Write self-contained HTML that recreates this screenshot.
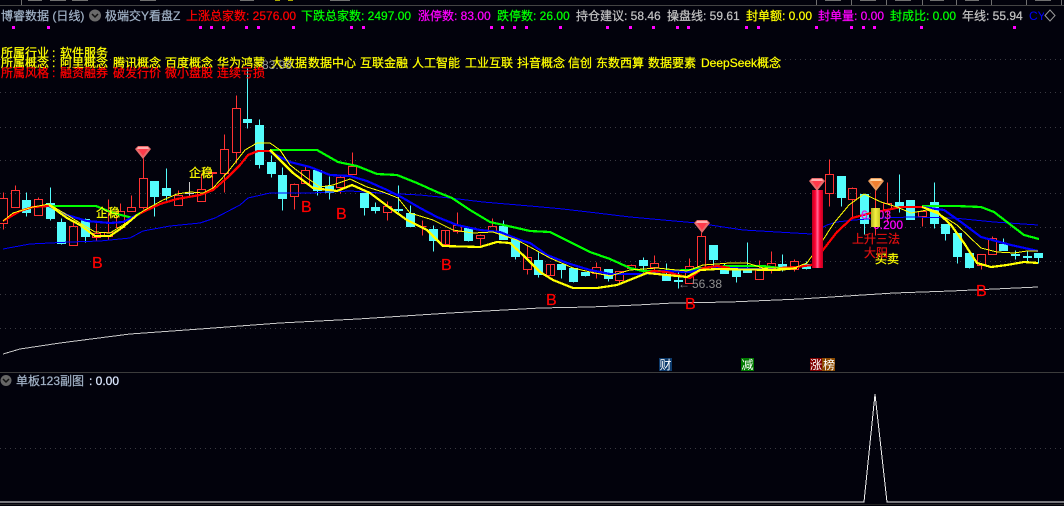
<!DOCTYPE html>
<html><head><meta charset="utf-8"><style>
html,body{margin:0;padding:0;background:#02020c;width:1064px;height:506px;overflow:hidden}
svg{display:block}
text{font-family:"Liberation Sans","Noto Sans CJK SC",sans-serif;font-size:12px}
polyline{shape-rendering:crispEdges}
.s text,text.s{stroke-width:.25px;stroke:currentColor}
</style></head><body>
<svg width="1064" height="506" viewBox="0 0 1064 506" xmlns="http://www.w3.org/2000/svg">
<defs>
<linearGradient id="rb" x1="0" x2="1" y1="0" y2="0"><stop offset="0" stop-color="#b80020"/><stop offset=".3" stop-color="#ff0030"/><stop offset=".5" stop-color="#ff6a98"/><stop offset=".7" stop-color="#ff0030"/><stop offset="1" stop-color="#c00020"/></linearGradient>
<linearGradient id="yb" x1="0" x2="1" y1="0" y2="0"><stop offset="0" stop-color="#b0b020"/><stop offset=".5" stop-color="#f4f040"/><stop offset="1" stop-color="#c8c420"/></linearGradient>
</defs>
<rect width="1064" height="506" fill="#02020c"/>
<!-- top strip -->
<g fill="#707070" shape-rendering="crispEdges">
<rect x="0" y="5" width="1064" height="1" fill="#444"/>
<rect x="21" y="0" width="1" height="5"/>
<rect x="816" y="0" width="1" height="5"/><rect x="851" y="0" width="1" height="5"/><rect x="886" y="0" width="1" height="5"/><rect x="922" y="0" width="1" height="5"/><rect x="956" y="0" width="1" height="5"/><rect x="991" y="0" width="1" height="5"/><rect x="1026" y="0" width="1" height="5"/><rect x="1061" y="0" width="1" height="5"/>
<rect x="28" y="0" width="14" height="1"/><rect x="50" y="0" width="16" height="1"/><rect x="72" y="0" width="16" height="1"/><rect x="140" y="0" width="16" height="1"/><rect x="240" y="0" width="14" height="1"/>
<rect x="275" y="0" width="5" height="1" fill="#aa0"/><rect x="288" y="0" width="5" height="1" fill="#aa0"/><rect x="330" y="0" width="20" height="1"/><rect x="825" y="0" width="16" height="1"/><rect x="860" y="0" width="16" height="1"/><rect x="895" y="0" width="16" height="1"/><rect x="930" y="0" width="14" height="1"/><rect x="965" y="0" width="14" height="1"/><rect x="1035" y="0" width="16" height="1"/>
</g>
<!-- grid -->
<g stroke="#3a3a42" stroke-width="1" stroke-dasharray="1 4" shape-rendering="crispEdges">
<path d="M0 59.500H1064M0 92.500H1064M0 127.500H1064M0 160.500H1064M0 193.500H1064M0 227.500H1064M0 261.500H1064M0 294.500H1064M0 328.500H1064M0 448.500H1064"/>
</g>
<rect x="0" y="372" width="1064" height="1" fill="#3c3c3c" shape-rendering="crispEdges"/>
<rect x="0" y="504" width="1064" height="1" fill="#222" shape-rendering="crispEdges"/>
<!-- magenta dots -->
<g fill="#f0f" shape-rendering="crispEdges">
<rect x="12" y="26" width="3" height="3"/><rect x="47" y="26" width="3" height="3"/><rect x="199" y="26" width="3" height="3"/><rect x="210" y="26" width="3" height="3"/><rect x="222" y="26" width="3" height="3"/><rect x="245" y="26" width="3" height="3"/><rect x="257" y="26" width="3" height="3"/><rect x="292" y="26" width="3" height="3"/><rect x="350" y="26" width="3" height="3"/><rect x="362" y="26" width="3" height="3"/><rect x="490" y="26" width="3" height="3"/><rect x="501" y="26" width="3" height="3"/><rect x="513" y="26" width="3" height="3"/><rect x="525" y="26" width="3" height="3"/><rect x="559" y="26" width="3" height="3"/><rect x="606" y="26" width="3" height="3"/><rect x="629" y="26" width="3" height="3"/><rect x="652" y="26" width="3" height="3"/><rect x="676" y="26" width="3" height="3"/><rect x="687" y="26" width="3" height="3"/><rect x="745" y="26" width="3" height="3"/><rect x="757" y="26" width="3" height="3"/><rect x="815" y="26" width="3" height="3"/><rect x="850" y="26" width="3" height="3"/><rect x="862" y="26" width="3" height="3"/><rect x="873" y="26" width="3" height="3"/><rect x="920" y="26" width="3" height="3"/><rect x="1013" y="26" width="3" height="3"/>
</g>
<!-- header -->
<g class="s">
<text x="1" y="20" fill="#9fb0c4" color="#9fb0c4">博睿数据 (日线)</text>
<text x="105" y="20" fill="#9fb0c4" color="#9fb0c4">极端交Y看盘Z</text>
<text x="186" y="20" fill="#f00" color="#f00">上涨总家数: 2576.00</text>
<text x="301" y="20" fill="#0f0" color="#0f0">下跌总家数: 2497.00</text>
<text x="418" y="20" fill="#f0f" color="#f0f">涨停数: 83.00</text>
<text x="497" y="20" fill="#0f0" color="#0f0">跌停数: 26.00</text>
<text x="576" y="20" fill="#c0c0c0" color="#c0c0c0">持仓建议: 58.46</text>
<text x="667" y="20" fill="#c0c0c0" color="#c0c0c0">操盘线: 59.61</text>
<text x="746" y="20" fill="#ff0" color="#ff0">封单额: 0.00</text>
<text x="818" y="20" fill="#f0f" color="#f0f">封单量: 0.00</text>
<text x="890" y="20" fill="#0f0" color="#0f0">封成比: 0.00</text>
<text x="962" y="20" fill="#c0c0c0" color="#c0c0c0">年线: 55.94</text>
</g>
<circle cx="95" cy="15.500" r="6" fill="#6a6a6a"/><path d="M92 14l3 3 3-3" fill="none" stroke="#111" stroke-width="1.500"/>
<svg x="1029" y="5" width="15" height="22"><text x="0" y="15" fill="#00f">CYC</text></svg>
<path d="M1050 10l5 5.500-5 5.500-5-5.500z" fill="#02020c" stroke="#9a9a9a"/>
<!-- candles red -->
<g transform="translate(.5 .5)" fill="none" stroke="#ff3232" stroke-width="1" shape-rendering="crispEdges">
<path d="M3 192V198M3 223V229M-1 198h8V223h-8zM15 185V190M11 190h8V207h-8zM38 197V199M34 199h8V215h-8zM73 222V226M69 226h8V245h-8zM96 223V233M96 237V240M92 233h8V237h-8zM108 199V232M108 236V240M104 232h8V236h-8zM120 203V211M120 227V230M116 211h8V227h-8zM131 195V207M127 207h8V211h-8zM143 158V178M143 207V209M139 178h8V207h-8zM178 190V195M174 195h8V205h-8zM201 173V189M197 189h8V201h-8zM212 172V190M208 172h8V173h-8zM224 134V149M224 173V192M220 149h8V173h-8zM236 95V108M236 152V163M232 108h8V152h-8z"/>
<path d="M294 183V184M294 196V209M290 184h8V196h-8zM305 165V170M301 170h8V183h-8zM340 175V177M340 187V193M336 177h8V187h-8zM352 152V166M348 166h8V174h-8zM387 201V206M387 212V220M383 206h8V212h-8zM422 220V235M418 226h8M445 230V244M441 230h8V244h-8zM457 212V225M457 231V233M453 225h8V231h-8zM480 234V235M480 238V245M476 235h8V238h-8zM492 218V226M488 226h8V231h-8zM527 245V257M527 269V274M523 257h8V269h-8zM550 264V275M546 264h8V275h-8zM596 262V267M596 273V278M592 267h8V273h-8zM619 280V283M615 271h8V280h-8zM631 264V265M631 268V270M627 265h8V268h-8zM654 255V263M654 267V272M650 263h8V267h-8zM689 258V266M685 266h8V283h-8zM701 232V236M697 236h8V267h-8zM759 260V269M755 269h8V279h-8zM771 251V263M771 268V273M767 263h8V268h-8zM794 259V261M794 269V271M790 261h8V269h-8z"/>
<path d="M829 159V174M829 193V206M825 174h8V193h-8zM852 187V188M852 199V218M848 188h8V199h-8zM875 190V235M887 182V203M887 209V222M883 203h8V209h-8zM922 216V226M918 211h8V216h-8zM981 265V269M977 254h8V265h-8zM992 236V238M988 238h8V254h-8z"/>
</g>
<!-- candles cyan -->
<g transform="translate(.5 .5)" fill="#54fcfc" stroke="#54fcfc" stroke-width="1" shape-rendering="crispEdges">
<path d="M26 192V216M50 187V220M61 218V244M85 218V242M154 181V216M166 168V200M247 68V128M259 119V168M271 155V177M282 167V210M317 170V195M329 176V199M364 193V215M375 202V213M398 185V212M410 205V226M433 225V251M468 228V241M503 220V239M515 239V259M538 252V277M561 264V278M573 268V282M585 272V276M608 269V281M643 257V272M666 263V280M678 272V288M713 245V265M724 263V273M736 269V282M747 242V272M782 254V271M806 261V269M841 176V206M864 194V234M899 174V212M910 200V219M934 182V228M945 224V240M957 233V263M969 253V268M1003 238V250M1015 250V259M1027 250V262M1038 253V263"/>
<path d="M22 200h8V212h-8zM46 203h8V218h-8zM57 222h8V243h-8zM81 219h8V236h-8zM150 181h8V196h-8zM162 188h8V195h-8zM243 119h8V122h-8zM255 125h8V164h-8zM267 162h8V173h-8zM278 175h8V198h-8zM313 170h8V190h-8zM325 186h8V192h-8zM360 193h8V207h-8zM371 207h8V210h-8zM394 209h8V210h-8zM406 213h8V226h-8zM429 229h8V240h-8zM464 228h8V240h-8zM499 226h8V239h-8zM511 239h8V256h-8zM534 260h8V274h-8zM557 264h8V269h-8zM569 268h8V281h-8zM581 272h8V275h-8zM604 269h8V278h-8zM639 260h8V265h-8zM662 274h8V280h-8zM674 280h8V281h-8zM709 245h8V259h-8zM720 268h8V273h-8zM732 269h8V276h-8zM743 269h8V272h-8zM778 264h8V268h-8zM802 264h8V268h-8zM837 176h8V197h-8zM860 194h8V223h-8zM895 202h8V207h-8zM906 200h8V219h-8zM930 202h8V223h-8zM941 224h8V233h-8zM953 233h8V256h-8zM965 253h8V267h-8zM999 244h8V250h-8zM1011 254h8V255h-8zM1023 256h8V257h-8zM1034 253h8V257h-8z"/>
</g>
<path d="M189.500 182V196M185 193.500h9" stroke="#c8c8c8" fill="none" shape-rendering="crispEdges"/>
<!-- year line -->
<polyline points="3,354 20,349 60,343 130,334 200,329 280,323 358,319 450,313 540,308 590,307 637,305 673,303 730,302 800,299 894,293 951,291 1038,287" fill="none" stroke="#c8c8c8" stroke-width="1"/>
<!-- long blue -->
<polyline points="3,249 30,244 70,242 100,241 130,238 143,231 170,226 200,223 215,218 240,205 248,198 270,193 310,193 350,191 380,193 420,195 450,198 483,202 530,206 563,209 597,213 630,217 663,220 697,223 743,230 794,233 811,234 827,225 837,222 854,220 881,218 911,217 954,218 994,222 1038,225" fill="none" stroke="#0000ff" stroke-width="1"/>
<!-- thick bands -->
<g fill="none" stroke-width="2.200" stroke-linejoin="round">
<polyline stroke="#ff0000" points="3,221 20,211 33,207 49,206"/>
<polyline stroke="#ff0000" points="132,218 143,212 160,204 177,199 200,195 213,190 227,178 240,165 248,155 258,151 270,151"/>
<polyline stroke="#00ff00" points="49,206 96,206 113,213 133,218 140,213"/>
<polyline stroke="#00ff00" points="270,150 317,150 338,162 357,166 377,174 397,175 417,183 437,192 452,198 470,210 490,222 517,228 530,231 550,232 570,242 590,252 610,259 630,268 643,271 663,271 690,270 710,267 730,266 763,266 780,268 797,268"/>
<polyline stroke="#00ff00" points="922,206 957,206 981,207 994,212 1007,222 1024,235 1039,239"/>
<polyline stroke="#0000ff" points="49,206 67,215 87,221 110,223 123,222 137,215"/>
<polyline stroke="#0000ff" points="270,152 290,162 310,167 330,175 350,176 367,181 387,190 403,198 420,208 437,217 457,225 480,230 500,232 520,240 530,243 547,255 567,263 590,270 610,274 643,274 663,271 690,272 710,267 730,268 777,270 797,268"/>
<polyline stroke="#0000ff" points="922,207 944,210 961,222 981,237 1011,245 1038,251"/>
<polyline stroke="#ff0000" points="643,274 653,271 667,272 690,278 703,268 717,266 730,268"/>
<polyline stroke="#ff0000" points="780,268 797,267 812,265 823,250 837,232 852,218 871,213 887,210 901,207 922,207"/>
<polyline stroke="#ffff00" points="49,205 67,218 80,225 95,236 110,236 123,227 137,215"/>
<polyline stroke="#ffff00" points="270,150 293,173 313,188 337,191 352,185 370,193 390,208 407,220 427,230 443,246 480,247 497,242 510,243 523,255 540,272 553,280 573,288 597,288 617,285 637,277 647,273 667,275 687,277 700,270 717,269 777,270 797,268"/>
<polyline stroke="#ffff00" points="922,207 937,212 951,225 964,243 977,263 991,267 1007,265 1024,262 1038,263"/>
</g>
<!-- thin yellow -->
<polyline fill="none" stroke="#ffff00" stroke-width="1" points="3,221 13,213 33,207 49,204 67,215 80,223 95,232 110,233 123,225 143,211 163,200 177,194 190,192 203,193 213,188 227,173 245,150 257,143 270,143 280,150 290,165 307,178 320,187 333,185 350,179 367,187 383,192 398,198 410,213 433,220 453,230 473,233 493,232 517,240 530,247 550,258 573,268 590,272 610,276 630,270 657,268 687,271 703,265 730,263 747,263 763,268 794,268 807,263 821,243 834,223 849,205 864,194 881,202 897,207 911,213 927,210 941,215 957,225 981,248 997,252 1014,253 1027,251 1038,251"/>
<!-- magenta label, bars above lines -->
<g class="s">
<text x="861" y="219" fill="#e010e0" color="#e010e0">6.103</text>
<text x="873" y="229" fill="#f0f" color="#f0f">0.200</text>
</g>
<rect x="812" y="190" width="11" height="78" fill="url(#rb)"/>
<rect x="871" y="208" width="9" height="19" fill="url(#yb)"/>
<!-- diamonds -->
<g>
<g transform="translate(143 152)"><path d="M-8-3l3-3H5l3 3L0 7z" fill="#e86a6a"/><path d="M-5-3H5L0 4z" fill="#ff3a4a"/><path d="M-5-5H5l1 2H-6z" fill="#ffb0b0"/></g>
<g transform="translate(702 226)"><path d="M-8-3l3-3H5l3 3L0 7z" fill="#e86a6a"/><path d="M-5-3H5L0 4z" fill="#ff3a4a"/><path d="M-5-5H5l1 2H-6z" fill="#ffb0b0"/></g>
<g transform="translate(817 184)"><path d="M-8-3l3-3H5l3 3L0 7z" fill="#e86a6a"/><path d="M-5-3H5L0 4z" fill="#ff3a4a"/><path d="M-5-5H5l1 2H-6z" fill="#ffb0b0"/></g>
<g transform="translate(876 184)"><path d="M-8-3l3-3H5l3 3L0 7z" fill="#e89a5a"/><path d="M-5-3H5L0 4z" fill="#f08030"/><path d="M-5-5H5l1 2H-6z" fill="#ffd8a8"/></g>
</g>
<!-- B markers -->
<g class="s" fill="#f00" color="#f00">
<text x="92" y="268" style="font-size:16px">B</text>
<text x="301" y="212" style="font-size:16px">B</text>
<text x="336" y="219" style="font-size:16px">B</text>
<text x="441" y="270" style="font-size:16px">B</text>
<text x="546" y="305" style="font-size:16px">B</text>
<text x="685" y="309" style="font-size:16px">B</text>
<text x="976" y="296" style="font-size:16px">B</text>
</g>
<g class="s" fill="#ff0" color="#ff0">
<text x="96" y="217">企稳</text>
<text x="189" y="177">企稳</text>
<text x="875" y="263">买卖</text>
</g>
<g class="s" fill="#e01010" color="#e01010">
<text x="852" y="243">上升三法</text>
<text x="864" y="257">大阳</text>
</g>
<text x="678" y="288" fill="#909090">←</text><text x="692" y="288" fill="#909090">56.38</text>
<!-- concept lines -->
<g class="s" fill="#ff0" color="#ff0">
<text x="1" y="57">所属行业</text><text x="52" y="57">:</text><text x="60" y="57">软件服务</text>
<text x="1" y="67">所属概念</text><text x="52" y="67">:</text><text x="60" y="67">阿里概念</text><text x="113" y="67">腾讯概念</text><text x="165" y="67">百度概念</text><text x="217" y="67">华为鸿蒙</text><text x="271" y="67">大数据</text><text x="308" y="67">数据中心</text><text x="360" y="67">互联金融</text><text x="412" y="67">人工智能</text><text x="465" y="67">工业互联</text><text x="517" y="67">抖音概念</text><text x="568" y="67">信创</text><text x="596" y="67">东数西算</text><text x="648" y="67">数据要素</text><text x="701" y="67">DeepSeek概念</text>
</g>
<g class="s" fill="#f00" color="#f00">
<text x="1" y="77">所属风格</text><text x="52" y="77">:</text><text x="60" y="77">融资融券</text><text x="113" y="77">破发行价</text><text x="165" y="77">微小盘股</text><text x="217" y="77">连续亏损</text>
</g>
<text x="262" y="69" fill="#9a9a9a">83.98</text>
<!-- badges -->
<g shape-rendering="crispEdges">
<rect x="659" y="358" width="13" height="13" fill="#0c3a6c"/><rect x="741" y="358" width="13" height="13" fill="#007a00"/><rect x="810" y="358" width="12" height="13" fill="#800000"/><rect x="822" y="358" width="13" height="13" fill="#8a4a00"/>
</g>
<g fill="#fff">
<text x="659.500" y="369">财</text><text x="741.500" y="369">减</text><text x="810" y="369">涨</text><text x="823" y="369">榜</text>
</g>
<!-- sub pane -->
<circle cx="6" cy="380.500" r="5.500" fill="#666"/><path d="M3 379l3 3 3-3" fill="none" stroke="#111" stroke-width="1.500"/>
<g class="s">
<text x="16" y="385" fill="#a0b0c4" color="#a0b0c4">单板123副图</text>
<text x="89" y="385" fill="#dce8ff" color="#dce8ff">: 0.00</text>
</g>
<polyline points="0,502 864,502 875,394 887,502 1064,502" fill="none" stroke="#f0f0f0" stroke-width="1"/>
</svg>
</body></html>
